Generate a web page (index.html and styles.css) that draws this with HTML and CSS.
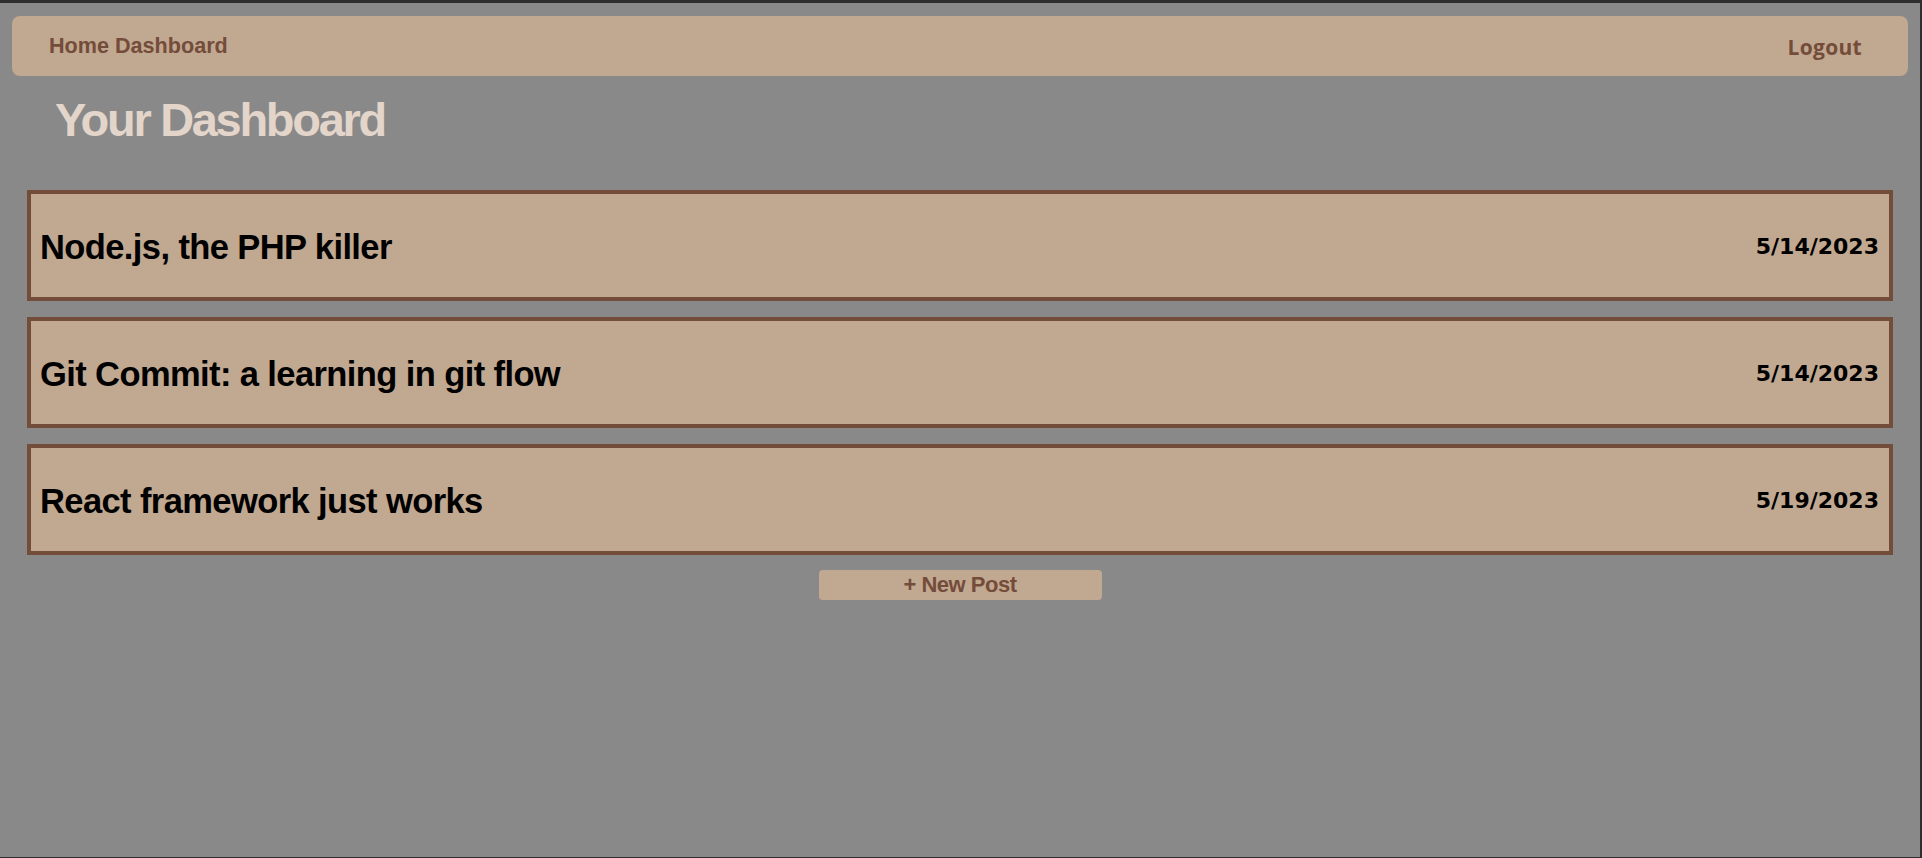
FILE: index.html
```html
<!DOCTYPE html>
<html lang="en">
<head>
<meta charset="utf-8">
<title>Your Dashboard</title>
<link rel="stylesheet" href="styles.css">
</head>
<body>
<div class="frame">
  <nav class="navbar">
    <a class="nav-home" href="#">Home Dashboard</a>
    <a class="nav-logout" href="#">Logout</a>
  </nav>
  <main class="dashboard">
    <h1 class="page-title">Your Dashboard</h1>
    <section class="post-list">
      <article class="post-card">
        <h2 class="post-title">Node.js, the PHP killer</h2>
        <span class="post-date">5/14/2023</span>
      </article>
      <article class="post-card">
        <h2 class="post-title">Git Commit: a learning in git flow</h2>
        <span class="post-date">5/14/2023</span>
      </article>
      <article class="post-card">
        <h2 class="post-title">React framework just works</h2>
        <span class="post-date">5/19/2023</span>
      </article>
    </section>
    <div class="actions">
      <button class="new-post" type="button">+ New Post</button>
    </div>
  </main>
</div>
</body>
</html>
```

FILE: styles.css
```css
html, body {
  margin: 0;
  padding: 0;
}

body {
  background: #898989;
  font-family: "Liberation Sans", Arial, sans-serif;
}

.frame {
  box-sizing: border-box;
  height: 858px;
  border-top: 3px solid #2e2e2e;
  border-right: 2px solid #2e2e2e;
  border-bottom: 1px solid #2e2e2e;
  background: #898989;
}

.navbar {
  margin: 13px 12px 0 12px;
  height: 60px;
  box-sizing: border-box;
  background: #c1a891;
  border-radius: 8px;
  padding: 0 46px 0 37px;
  display: flex;
  justify-content: space-between;
  align-items: center;
}

.nav-home {
  color: #744c3a;
  text-decoration: none;
  font-family: "Liberation Sans", Arial, sans-serif;
  font-weight: 700;
  font-size: 21.6px;
  margin-top: -1px;
}

.nav-logout {
  color: #744c3a;
  text-decoration: none;
  font-family: "Open Sans", Lato, sans-serif;
  font-weight: 700;
  font-size: 21px;
  letter-spacing: 0.3px;
  margin-top: 2px;
}

.dashboard {
  display: flex;
  flex-direction: column;
}

.page-title {
  margin: 20px 0 0 55px;
  font-family: "Liberation Sans", Arial, sans-serif;
  font-weight: 700;
  font-size: 47px;
  line-height: 47px;
  letter-spacing: -2.3px;
  color: #e3d5ca;
}

.post-list {
  margin-top: 47px;
  padding: 0 27px;
  display: flex;
  flex-direction: column;
  gap: 16px;
}

.post-card {
  box-sizing: border-box;
  height: 111px;
  border: 4px solid #744c3a;
  background: #c1a891;
  display: flex;
  justify-content: space-between;
  align-items: center;
  padding: 1px 10px 0 9px;
}

.post-title {
  margin: 2px 0 0 0;
  font-family: "Liberation Sans", Arial, sans-serif;
  font-weight: 700;
  font-size: 34.5px;
  letter-spacing: -0.6px;
  color: #000;
}

.post-date {
  font-family: "DejaVu Sans", sans-serif;
  font-weight: 700;
  font-size: 22px;
  color: #000;
}

.actions {
  display: flex;
  justify-content: center;
  margin-top: 15px;
}

.new-post {
  width: 283px;
  height: 30px;
  border: none;
  border-radius: 4px;
  background: #c1a891;
  color: #744c3a;
  font-family: "Liberation Sans", Arial, sans-serif;
  font-weight: 700;
  font-size: 22px;
  letter-spacing: -0.5px;
  padding: 0;
  line-height: 30px;
}
```
